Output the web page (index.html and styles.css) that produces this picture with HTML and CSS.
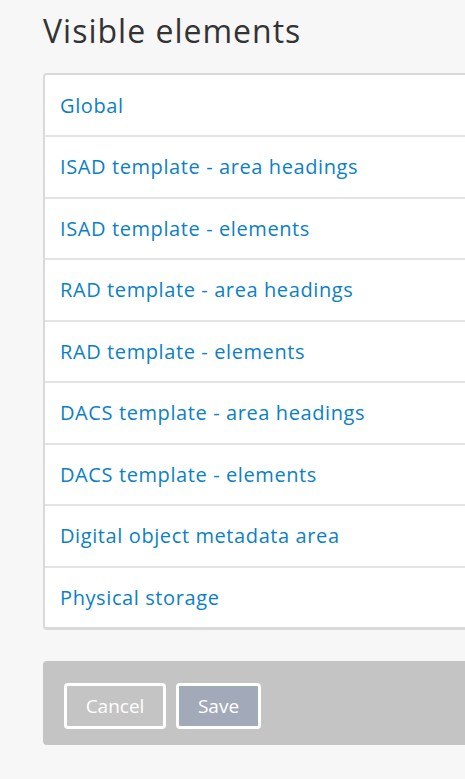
FILE: index.html
```html
<!DOCTYPE html>
<html lang="en">
<head>
    <meta charset="UTF-8">
    <meta name="viewport" content="width=device-width, initial-scale=1.0">
    <title>Visible elements</title>
    <link rel="stylesheet" href="styles.css">
</head>
<body>
    <div class="page">
        <h1>Visible elements</h1>

        <ul class="element-list">
            <li><a href="#">Global</a></li>
            <li><a href="#">ISAD template - area headings</a></li>
            <li><a href="#">ISAD template - elements</a></li>
            <li><a href="#">RAD template - area headings</a></li>
            <li><a href="#">RAD template - elements</a></li>
            <li><a href="#">DACS template - area headings</a></li>
            <li><a href="#">DACS template - elements</a></li>
            <li><a href="#">Digital object metadata area</a></li>
            <li><a href="#">Physical storage</a></li>
        </ul>

        <div class="actions">
            <button class="btn btn-cancel">Cancel</button>
            <button class="btn btn-save">Save</button>
        </div>
    </div>
</body>
</html>
```

FILE: styles.css
```css
html, body {
    margin: 0;
    padding: 0;
    background-color: #f7f7f7;
    overflow: hidden;
}
body {
    font-family: "Open Sans", "Liberation Sans", sans-serif;
    color: #333;
}
.page {
    width: 620px;
    padding: 0 0 0 43px;
}
h1 {
    font-size: 32px;
    font-weight: 400;
    letter-spacing: 1px;
    line-height: 40px;
    margin: 11px 0 22px;
    color: #333;
}
.element-list {
    list-style: none;
    margin: 0;
    padding: 0;
    background-color: #fff;
    border: 2px solid #dadada;
    border-bottom-width: 3px;
    border-radius: 4px;
}
.element-list li {
    height: 59.5px;
    display: flex;
    align-items: center;
    padding-left: 15px;
    border-top: 2px solid #e4e4e4;
}
.element-list li:first-child {
    border-top: none;
    height: 60px;
}
.element-list a {
    font-size: 20px;
    letter-spacing: 0.6px;
    color: #0b7fc7;
    text-decoration: none;
}
.actions {
    margin-top: 31px;
    background-color: #c4c4c4;
    border-radius: 4px;
    box-sizing: border-box;
    height: 84px;
    padding: 22px 0 0 21px;
    display: flex;
    align-items: flex-start;
    gap: 10px;
}
.btn {
    font-family: inherit;
    font-size: 19px;
    color: #fff;
    height: 46px;
    padding: 0;
    border: 3px solid #fff;
    border-radius: 4px;
    cursor: pointer;
}
.btn-cancel {
    width: 102px;
    background-color: #c4c4c4;
}
.btn-save {
    width: 85px;
    background-color: #a2aab9;
}
```
